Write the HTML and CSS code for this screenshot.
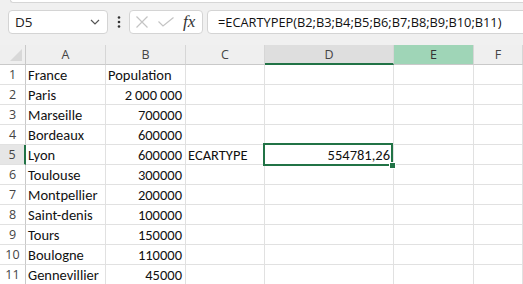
FILE: index.html
```html
<!DOCTYPE html>
<html lang="fr">
<head>
    <meta charset="UTF-8">
    <meta name="viewport" content="width=device-width, initial-scale=1.0">
    <title>Classeur</title>
    <link rel="stylesheet" href="styles.css">
</head>
<body>
    <div class="ribbon-edge"></div>

    <header class="formula-bar">
        <div class="namebox">
            <span>D5</span>
            <svg width="10" height="6" viewBox="0 0 10 6"><path d="M1 1 L5 5 L9 1" fill="none" stroke="#555" stroke-width="1.2"/></svg>
        </div>
        <div class="dots">
            <svg width="4" height="12" viewBox="0 0 4 12"><circle cx="2" cy="1.5" r="1.3" fill="#333"/><circle cx="2" cy="6" r="1.3" fill="#333"/><circle cx="2" cy="10.5" r="1.3" fill="#333"/></svg>
        </div>
        <div class="fx-buttons">
            <svg class="cancel" width="12" height="12" viewBox="0 0 12 12"><path d="M0.5 0.5 L11.5 11.5 M11.5 0.5 L0.5 11.5" stroke="#c4c4c4" stroke-width="1.2"/></svg>
            <svg class="enter" width="16" height="10" viewBox="0 0 16 10"><path d="M0.5 4.5 L5 9 L15.5 0.5" fill="none" stroke="#c4c4c4" stroke-width="1.2"/></svg>
            <span class="fx">fx</span>
        </div>
        <div class="formula">=ECARTYPEP(B2;B3;B4;B5;B6;B7;B8;B9;B10;B11)</div>
    </header>

    <main class="sheet">
        <div class="corner"></div>
        <div class="col-head">A</div>
        <div class="col-head">B</div>
        <div class="col-head">C</div>
        <div class="col-head active">D</div>
        <div class="col-head hover">E</div>
        <div class="col-head">F</div>

        <div class="row-head">1</div><div class="cell">France</div><div class="cell">Population</div><div class="cell"></div><div class="cell"></div><div class="cell"></div><div class="cell"></div>
        <div class="row-head">2</div><div class="cell">Paris</div><div class="cell num">2&#8201;000&#8201;000</div><div class="cell"></div><div class="cell"></div><div class="cell"></div><div class="cell"></div>
        <div class="row-head">3</div><div class="cell">Marseille</div><div class="cell num">700000</div><div class="cell"></div><div class="cell"></div><div class="cell"></div><div class="cell"></div>
        <div class="row-head">4</div><div class="cell">Bordeaux</div><div class="cell num">600000</div><div class="cell"></div><div class="cell"></div><div class="cell"></div><div class="cell"></div>
        <div class="row-head active">5</div><div class="cell">Lyon</div><div class="cell num">600000</div><div class="cell">ECARTYPE</div><div class="cell num">554781,26</div><div class="cell"></div><div class="cell"></div>
        <div class="row-head">6</div><div class="cell">Toulouse</div><div class="cell num">300000</div><div class="cell"></div><div class="cell"></div><div class="cell"></div><div class="cell"></div>
        <div class="row-head">7</div><div class="cell">Montpellier</div><div class="cell num">200000</div><div class="cell"></div><div class="cell"></div><div class="cell"></div><div class="cell"></div>
        <div class="row-head">8</div><div class="cell">Saint-denis</div><div class="cell num">100000</div><div class="cell"></div><div class="cell"></div><div class="cell"></div><div class="cell"></div>
        <div class="row-head">9</div><div class="cell">Tours</div><div class="cell num">150000</div><div class="cell"></div><div class="cell"></div><div class="cell"></div><div class="cell"></div>
        <div class="row-head">10</div><div class="cell">Boulogne</div><div class="cell num">110000</div><div class="cell"></div><div class="cell"></div><div class="cell"></div><div class="cell"></div>
        <div class="row-head">11</div><div class="cell">Gennevillier</div><div class="cell num">45000</div><div class="cell"></div><div class="cell"></div><div class="cell"></div><div class="cell"></div>

        <!-- cellule active -->
        <div class="selection"><span class="handle"></span></div>
    </main>
</body>
</html>
```

FILE: styles.css
```css
body {
    margin: 0;
    height: 284px;
    overflow: hidden;
    background: #f0f0f0;
    font-family: 'Open Sans', 'Noto Sans', sans-serif;
}

.ribbon-edge {
    height: 2px;
    margin-left: 10px;
    background: #fff;
    border-left: 1px solid #d6d6d6;
    border-bottom: 1px solid #d6d6d6;
    border-bottom-left-radius: 4px;
}

.formula-bar {
    display: flex;
    align-items: flex-start;
    height: 39px;
    box-sizing: border-box;
    padding: 7px 0 0 8px;

    .namebox {
        width: 100px;
        height: 24px;
        box-sizing: border-box;
        display: flex;
        align-items: center;
        justify-content: space-between;
        padding: 0 7px 0 6px;
        background: #fff;
        border: 1px solid #d4d4d4;
        border-radius: 4px;
        font-size: 13.5px;
        color: #222;
    }

    .dots {
        width: 21px;
        height: 24px;
        display: flex;
        align-items: center;
        justify-content: center;
    }

    .fx-buttons {
        width: 74px;
        height: 24px;
        box-sizing: border-box;
        display: flex;
        align-items: center;
        padding-left: 6px;
        background: #fff;
        border: 1px solid #d4d4d4;
        border-radius: 4px;

        .enter {
            margin-left: 10px;
        }

        .fx {
            margin-left: 9px;
            font-family: 'Liberation Serif', serif;
            font-style: italic;
            font-size: 17px;
            color: #333;
            line-height: 20px;
        }
    }

    .formula {
        flex-grow: 1;
        height: 24px;
        box-sizing: border-box;
        margin-left: 4px;
        margin-right: -6px;
        padding-left: 10px;
        background: #fff;
        border: 1px solid #d4d4d4;
        border-radius: 4px;
        font-size: 12.8px;
        line-height: 22px;
        color: #111;
        white-space: nowrap;
    }
}

.sheet {
    position: relative;
    display: grid;
    grid-template-columns: 26px 80px 80px 79px 129px 80px 1fr;
    grid-auto-rows: 20px;
    margin-top: 3px;
    background: #fff;
}

.corner,
.col-head,
.row-head,
.cell {
    box-sizing: border-box;
    border-right: 1px solid #e1e1e1;
    border-bottom: 1px solid #e1e1e1;
    white-space: nowrap;
}

.corner {
    position: relative;
    background: #efefef;
    border-right-color: #c9c9c9;
    border-bottom-color: #c9c9c9;

    &::after {
        content: '';
        position: absolute;
        right: 3px;
        bottom: 3px;
        width: 0;
        height: 0;
        border-left: 12px solid transparent;
        border-bottom: 12px solid #d8d8d8;
    }
}

.col-head {
    background: #efefef;
    border-right-color: #d6d6d6;
    border-bottom-color: #c9c9c9;
    text-align: center;
    font-size: 12.5px;
    line-height: 19px;
    color: #444;

    &.active {
        background: #dedede;
        border-bottom: 2px solid #217346;
    }

    &.hover {
        background: #9fd5b7;
        color: #333;
    }
}

.row-head {
    background: #fff;
    border-right-color: #c9c9c9;
    text-align: center;
    font-size: 12.5px;
    line-height: 19px;
    color: #444;

    &.active {
        background: #e6e6e6;
        border-right: 2px solid #217346;
    }
}

.cell {
    padding: 1px 2px 0;
    font-family: 'Carlito', 'Lato', sans-serif;
    font-size: 14.5px;
    line-height: 18px;
    color: #111;

    &.num {
        text-align: right;
        padding-right: 3px;
    }
}

.selection {
    position: absolute;
    left: 263px;
    top: 98px;
    width: 130px;
    height: 23px;
    box-sizing: border-box;
    border: 2px solid #217346;
    pointer-events: none;

    .handle {
        position: absolute;
        right: -5px;
        bottom: -5px;
        width: 5px;
        height: 5px;
        background: #217346;
        border: 1px solid #fff;
    }
}
```
